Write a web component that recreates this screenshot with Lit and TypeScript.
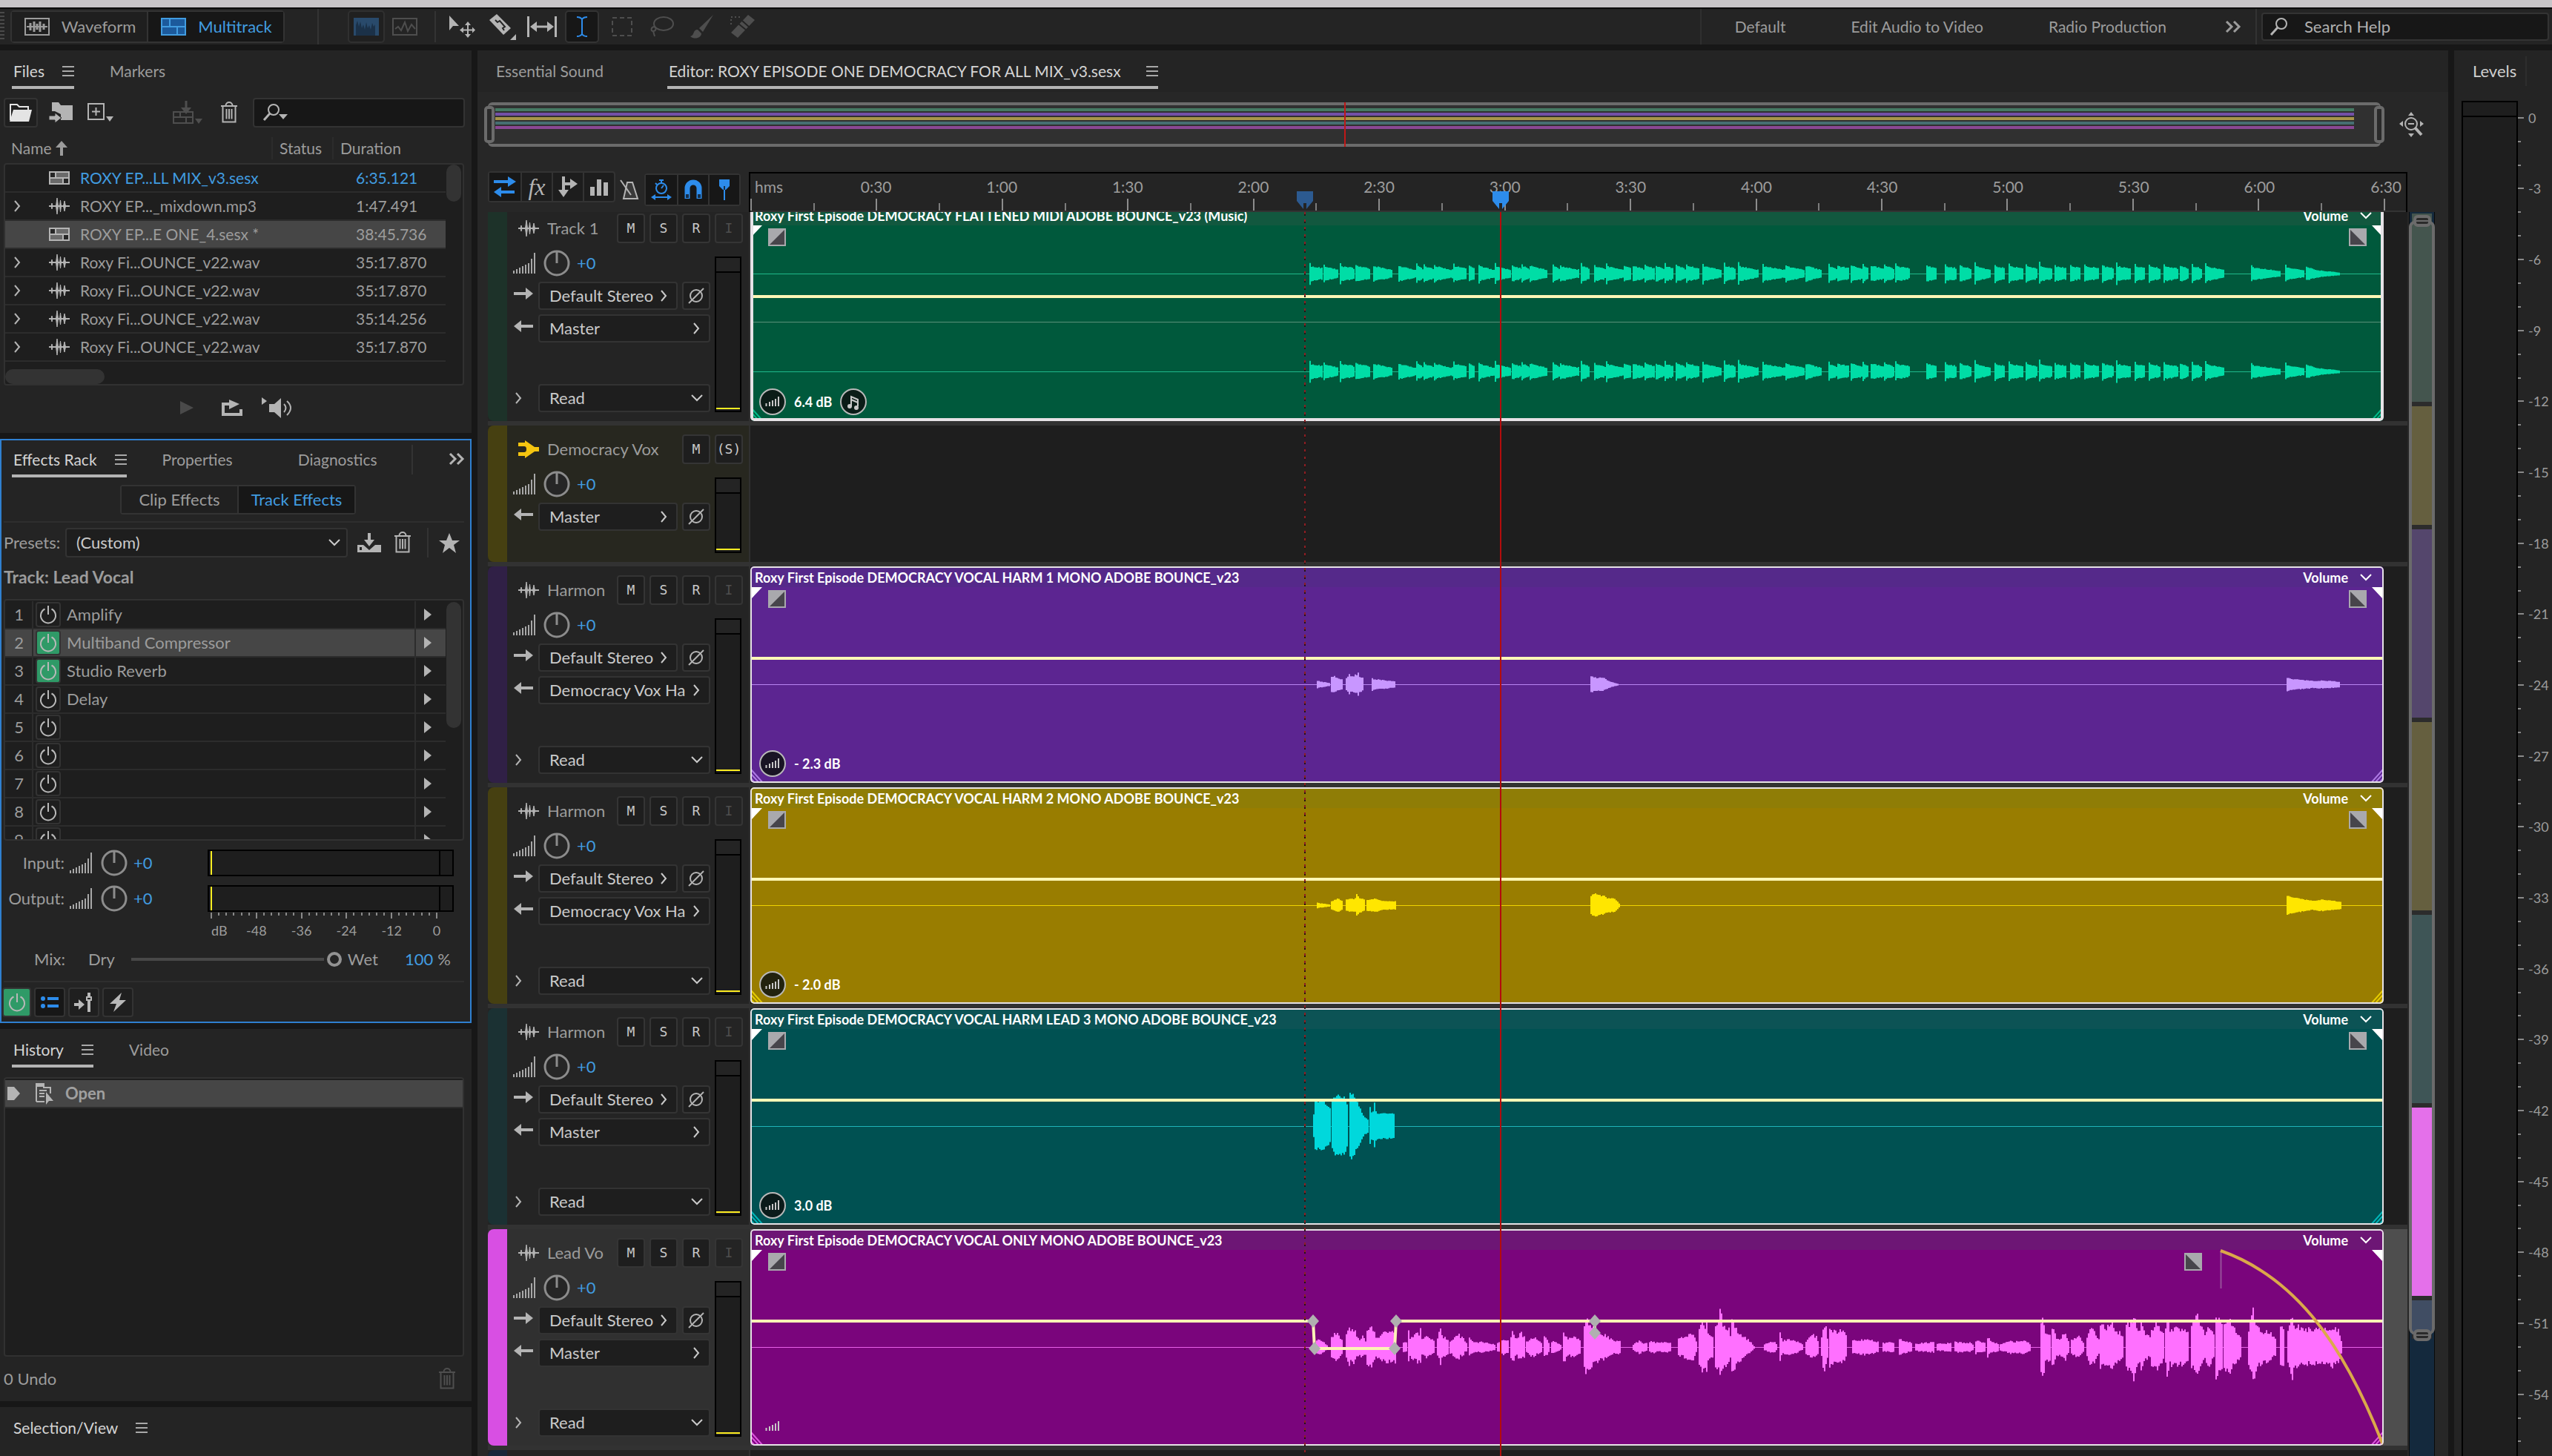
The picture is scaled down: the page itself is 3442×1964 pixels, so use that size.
import { LitElement, html, css, svg, nothing } from "lit";
import type { TemplateResult } from "lit";
import { customElement } from "lit/decorators.js";
import { classMap } from "lit/directives/class-map.js";
import { styleMap } from "lit/directives/style-map.js";

/* ---------- icons ---------- */

const icon = (w: number, h: number, body: unknown, cls = "") =>
  html`<svg class="icon ${cls}" width=${w} height=${h} viewBox="0 0 ${w} ${h}" aria-hidden="true">${body}</svg>`;

const menuIcon = () => icon(16, 14, svg`<path d="M0 1h16M0 7h16M0 13h16" stroke="currentColor" stroke-width="2"/>`);
const chevronRight = () => icon(8, 16, svg`<path d="M1 1l6 7-6 7" fill="none" stroke="currentColor" stroke-width="2"/>`);
const chevronDown = () => icon(16, 10, svg`<path d="M1 1l7 7 7-7" fill="none" stroke="currentColor" stroke-width="2"/>`);
const doubleChevron = () => icon(20, 16, svg`<path d="M1 1l7 7-7 7M11 1l7 7-7 7" fill="none" stroke="currentColor" stroke-width="3"/>`);
const trashIcon = () => icon(24, 30, svg`<path d="M1 6h22M7.500 5.500c0-6 9-6 9 0M3.500 6v21.500h17V6M8.500 10v13.500M12 10v13.500M15.500 10v13.500" fill="none" stroke="currentColor" stroke-width="2"/>`);
const powerIcon = () => icon(24, 26, svg`<path d="M7.500 5.500a10 10 0 1 0 9 0M12 1v12" fill="none" stroke="currentColor" stroke-width="2"/>`);
const waveIcon = () => icon(28, 22, svg`<path d="M0 11h28" stroke="currentColor" stroke-width="2"/><path d="M3 11l1-4 1 4-1 4zM9.500 11l1.500-11 1.500 11-1.500 11zM14.500 11l1-8 1 8-1 8zM19.500 11l1.500-7 1.500 7-1.500 7z" fill="currentColor" stroke="currentColor"/>`);
const sessionIcon = () => icon(28, 18, svg`<rect x="1" y="1" width="26" height="16" fill="#6a6a6a" stroke="currentColor" stroke-width="2"/><path d="M1 9h26M9 1v8M19 9v8" stroke="currentColor" stroke-width="2"/><rect x="2" y="2" width="6" height="6" fill="#262626"/><rect x="20" y="10" width="6" height="6" fill="#262626"/>`);
const signalIcon = () => icon(32, 28, svg`<path d="M1 28v-4M5 28v-6M9 28v-8M13 28v-10M17 28v-12M21 28v-14M25 28v-20M29 28V0" stroke="currentColor" stroke-width="2"/>`);
const knobIcon = () => icon(36, 36, svg`<circle cx="18" cy="18" r="16" fill="#262626" stroke="#8c8c8c" stroke-width="3"/><path d="M18 3v15" stroke="#8c8c8c" stroke-width="3"/>`);
const arrowRight = () => icon(26, 16, svg`<path d="M0 8h18" stroke="currentColor" stroke-width="4"/><path d="M16 0l10 8-10 8z" fill="currentColor"/>`);
const arrowLeft = () => icon(26, 16, svg`<path d="M8 8h18" stroke="currentColor" stroke-width="4"/><path d="M10 0L0 8l10 8z" fill="currentColor"/>`);
const phaseIcon = () => icon(24, 24, svg`<circle cx="12" cy="12" r="8" fill="none" stroke="currentColor" stroke-width="2"/><path d="M2 22L22 2" stroke="currentColor" stroke-width="2"/>`);
const triangleRight = (w: number, h: number) => icon(w, h, svg`<path d="M0 0L${w} ${h / 2}L0 ${h}z" fill="currentColor"/>`);

const waveformView = () => icon(34, 24, svg`<rect x="1" y="1" width="32" height="22" fill="none" stroke="currentColor" stroke-width="2"/><path d="M3 12h28" stroke="currentColor" stroke-width="2"/><path d="M8 7v10M13 5v14M17 8v8M21 5v14M26 8v8" stroke="currentColor" stroke-width="3"/>`);
const multitrackView = () => icon(34, 24, svg`<rect x="1" y="1" width="32" height="22" fill="#1c5a9c" stroke="currentColor" stroke-width="2"/><path d="M1 12h32M12 1v11M22 12v11" stroke="currentColor" stroke-width="2"/>`);
const frequencyView = () => icon(34, 24, svg`<rect width="34" height="24" fill="#294a6b"/><path d="M3 24V10l2-6 2 8 2-7 2 9 2-5 2 7 2-10 2 8 2-4 2 6 2-9 2 5 2-3v15z" fill="#1b3148"/>`);
const pitchView = () => icon(34, 24, svg`<rect x="1" y="1" width="32" height="22" fill="none" stroke="currentColor" stroke-width="2"/><path d="M4 15l4-3 4 5 5-11 4 12 5-9 5 6" fill="none" stroke="currentColor" stroke-width="2"/>`);
const moveTool = () => icon(36, 30, svg`<path d="M1 0l13 14H6l-5 6z" fill="currentColor"/><path d="M26 11v17M17 19.500h18" stroke="currentColor" stroke-width="2"/><path d="M26 8l4 5h-8zM26 30l4-5h-8zM15 19.500l5-4v8zM36 19.500l-4-4v8z" fill="currentColor"/>`);
const razorTool = () => icon(38, 36, svg`<path d="M2 9L12 1l19 19-10 9z" fill="currentColor"/><path d="M10 9l3 3 3-2 7 8-3 2 2 3" fill="none" stroke="#242424" stroke-width="2"/><path d="M38 28v8h-8z" fill="currentColor"/>`);
const slipTool = () => icon(40, 28, svg`<path d="M1.500 0v28M38.500 0v28M8 14h24" stroke="currentColor" stroke-width="3"/><path d="M4 14l9-7v14zM36 14l-9-7v14z" fill="currentColor"/>`);
const timeTool = () => icon(16, 28, svg`<path d="M1 1q5 0 7 3q2-3 7-3M1 27q5 0 7-3q2 3 7 3M8 4v20" fill="none" stroke="currentColor" stroke-width="2"/>`);
const marqueeTool = () => icon(28, 26, svg`<rect x="1" y="1" width="26" height="24" fill="none" stroke="currentColor" stroke-width="2" stroke-dasharray="6 4"/>`);
const lassoTool = () => icon(34, 28, svg`<ellipse cx="19" cy="10" rx="13" ry="9" fill="none" stroke="currentColor" stroke-width="2"/><path d="M7 14c-5 0-6 6-2 6s5-5 1-6M5 20l2 7" fill="none" stroke="currentColor" stroke-width="2"/>`);
const brushTool = () => icon(32, 32, svg`<path d="M31 0L12 18l5 5z" fill="currentColor"/><path d="M10 20c-7 0-4 8-10 9 6 5 15 2 15-4z" fill="currentColor"/>`);
const healTool = () => icon(36, 32, svg`<path d="M26 0l9 7L12 31l-9-7z" fill="currentColor"/><path d="M13 12l11 9M18 8l10 9" stroke="#242424" stroke-width="2"/><path d="M3 13V3h12" fill="none" stroke="currentColor" stroke-width="2" stroke-dasharray="2 3"/>`);
const searchIcon = () => icon(24, 24, svg`<circle cx="15" cy="8" r="7" fill="none" stroke="currentColor" stroke-width="2"/><path d="M10 13L1 23" stroke="currentColor" stroke-width="3"/>`);
const searchMenuIcon = () => icon(34, 24, svg`<circle cx="14" cy="8" r="7" fill="none" stroke="currentColor" stroke-width="2"/><path d="M9 13L1 22" stroke="currentColor" stroke-width="3"/><path d="M21 14h12l-6 7z" fill="currentColor"/>`);

const openIcon = () => icon(30, 24, svg`<path d="M1 22V1h9l3 3h12v4" fill="none" stroke="#e4e4e4" stroke-width="2"/><path d="M5 8h25l-4 16H0z" fill="#e4e4e4"/>`);
const importIcon = () => icon(32, 28, svg`<path d="M4 0h9l3 4h16v20H16v-8l-8-4H4z" fill="currentColor"/><path d="M0 18h8v-4l9 7-9 7v-4H0z" fill="currentColor" stroke="#242424" stroke-width="1"/>`);
const newIcon = () => icon(36, 26, svg`<rect x="1" y="1" width="21" height="21" fill="none" stroke="currentColor" stroke-width="2"/><path d="M11.500 6v11M6 11.500h11" stroke="currentColor" stroke-width="2"/><path d="M25 18h10l-5 7z" fill="currentColor"/>`);
const insertIcon = () => icon(40, 32, svg`<path d="M18 0v12" stroke="currentColor" stroke-width="3"/><path d="M11 9h14l-7 9z" fill="currentColor"/><rect x="1" y="15" width="26" height="15" fill="none" stroke="currentColor" stroke-width="2"/><path d="M1 22h26M10 15v7M18 22v8" stroke="currentColor" stroke-width="2"/><path d="M30 24h10l-5 7z" fill="currentColor"/>`);
const loopIcon = () => icon(28, 22, svg`<path d="M10 6H2v14h24v-7" fill="none" stroke="currentColor" stroke-width="4"/><path d="M10 0l14 6-14 7z" fill="currentColor"/>`);
const autoplayIcon = () => icon(40, 28, svg`<path d="M0 0l7 5-7 5zM10 9h7l9-8v27l-9-8h-7z" fill="currentColor"/><path d="M30 9q5 5 0 11M34 5q10 9 0 19" fill="none" stroke="currentColor" stroke-width="2"/>`);
const savePresetIcon = () => icon(32, 26, svg`<path d="M16 0v10" stroke="currentColor" stroke-width="4"/><path d="M9 9h14l-7 9z" fill="currentColor"/><path d="M0 16h8l8 7 8-7h8v10H0z" fill="currentColor"/><rect x="3" y="19" width="3" height="4" fill="#242424"/>`);
const starIcon = () => icon(28, 27, svg`<path d="M14 0l4 10h10l-8 6 3 11-9-7-9 7 3-11-8-6h10z" fill="currentColor"/>`);
const listIcon = () => icon(24, 18, svg`<circle cx="3" cy="4" r="3" fill="currentColor"/><circle cx="3" cy="14" r="3" fill="currentColor"/><path d="M9 4h15M9 14h15" stroke="currentColor" stroke-width="4"/>`);
const preFaderIcon = () => icon(26, 26, svg`<path d="M0 16h8" stroke="currentColor" stroke-width="4"/><path d="M6 9l8 7-8 7z" fill="currentColor"/><path d="M20 0v26" stroke="currentColor" stroke-width="4"/><rect x="17" y="6" width="6" height="4" fill="#242424" stroke="currentColor" stroke-width="2"/>`);
const boltIcon = () => icon(22, 26, svg`<path d="M16 0L0 15h9L5 26 22 10h-9z" fill="currentColor"/>`);
const historyDocIcon = () => icon(26, 28, svg`<path d="M1 25V1h10v5h9v8M1 25h11" fill="none" stroke="currentColor" stroke-width="2"/><path d="M1 1h10v4H1zM14 12l10 12h-6l-4 5z" fill="currentColor"/><path d="M5 10h10M5 14h7M5 18h7" stroke="currentColor" stroke-width="2"/>`);

const ioIcon = () => icon(30, 28, svg`<path d="M0 7h20M10 21h18" stroke="currentColor" stroke-width="4"/><path d="M19 0l11 7-11 7zM10 14L0 21l10 7z" fill="currentColor"/>`);
const sendsIcon = () => icon(26, 28, svg`<path d="M7 0v20M7 10h10" stroke="currentColor" stroke-width="4"/><path d="M0 18h14L7 28zM16 3l10 7-10 7z" fill="currentColor"/>`);
const eqIcon = () => icon(24, 24, svg`<path d="M3 24V12M12 24V2M21 24V6" stroke="currentColor" stroke-width="6"/>`);
const metronomeIcon = () => icon(26, 28, svg`<path d="M10 4h7l7 22H5z" fill="#3a3a3a" stroke="currentColor" stroke-width="2"/><path d="M1 1l14 20" stroke="currentColor" stroke-width="2"/>`);
const stopwatchIcon = () => icon(28, 28, svg`<circle cx="14" cy="12" r="7" fill="none" stroke="currentColor" stroke-width="2"/><path d="M14 12l3-4M11 1h6M14 1v4M6 5l2 2M3 24h22" stroke="currentColor" stroke-width="2"/><path d="M0 24l6-4v8zM28 24l-6-4v8z" fill="currentColor"/>`);
const magnetIcon = () => icon(24, 26, svg`<path d="M4 25V11a8 8 0 0 1 16 0v14" fill="none" stroke="currentColor" stroke-width="7"/><path d="M2 19h4v5H2zM18 19h4v5h-4z" fill="#16304c"/>`);
const pinIcon = () => icon(16, 28, svg`<path d="M1 0h14v9l-5 5H6L1 9z" fill="currentColor"/><path d="M8 6v22" stroke="currentColor" stroke-width="2"/><path d="M8 9v5" stroke="#16304c" stroke-width="2"/>`);
const zoomFullIcon = () => icon(34, 34, svg`<circle cx="16" cy="16" r="8" fill="none" stroke="currentColor" stroke-width="2"/><path d="M12 16h8" stroke="currentColor" stroke-width="2"/><path d="M21 21l9 10" stroke="currentColor" stroke-width="4"/><path d="M16 0l4 5h-8zM16 34l-4-5h8zM0 16l5-4v8zM33 16l-5-4v8z" fill="currentColor"/>`);
const busIcon = () => icon(28, 24, svg`<path d="M0 3h9V0l13 9h6v6h-6L9 24v-3H0v-5h8q3 0 3-4t-3-4H0z" fill="#f5c510"/>`);
const fadeIn = () => icon(24, 24, svg`<rect width="24" height="24" fill="#a9a9ad"/><path d="M22 2v20H2z" fill="#47454b"/>`);
const fadeOut = () => icon(24, 24, svg`<rect width="24" height="24" fill="#a9a9ad"/><path d="M2 2v20h20z" fill="#47454b"/>`);
const gainBadge = () => icon(36, 36, svg`<circle cx="18" cy="18" r="17" fill="#0d1210" fill-opacity=".85" stroke="#b8b8b8" stroke-width="2"/><path d="M9.500 24v-4M14 24v-6M18 24v-8M22 24V14M26 24V11" stroke="#c8c8c8" stroke-width="2"/>`);
const gainBare = () => icon(36, 36, svg`<path d="M9.500 24v-4M14 24v-6M18 24v-8M22 24V14M26 24V11" stroke="#c8c8c8" stroke-width="2"/>`);
const noteBadge = () => icon(36, 36, svg`<circle cx="18" cy="18" r="17" fill="#0d1210" fill-opacity=".85" stroke="#b8b8b8" stroke-width="2"/><path d="M15 24V11l9 4v9M15 15l9 4" fill="none" stroke="#c8c8c8" stroke-width="2"/><ellipse cx="13" cy="24" rx="3" ry="3" fill="#c8c8c8"/><ellipse cx="22" cy="26" rx="3" ry="3" fill="#c8c8c8"/>`);

/* ---------- waveform model ---------- */

/** A burst is a flat list of position, half-height pairs. */
type Burst = number[];
interface Section { origin: number; step: number; bursts: Burst[] }

const noise = (n: number) => {
  const v = Math.sin(n * 127.1 + 11.7) * 43758.5453;
  return v - Math.floor(v);
};

const burstPath = (b: Burst, s: Section, mid: number, rough: number) => {
  const at = (u: number) => {
    for (let i = 0; i + 3 < b.length; i += 2) {
      if (u <= b[i + 2]) return b[i + 1] + ((b[i + 3] - b[i + 1]) * (u - b[i])) / (b[i + 2] - b[i] || 1);
    }
    return b[b.length - 1];
  };
  const top: string[] = [];
  const low: string[] = [];
  const first = b[0];
  const last = b[b.length - 2];
  const inc = 2 / s.step;
  for (let u = first; u < last; u += inc) {
    const x = Math.round(s.origin + u * s.step);
    const a = at(u) / 3;
    const up = (a * (1 - rough * noise(x))).toFixed(1);
    const dn = (a * 0.92 * (1 - rough * noise(x + 900))).toFixed(1);
    top.push(`L${x} ${mid - +up}L${x + 2} ${mid - +up}`);
    low.unshift(`L${x + 2} ${mid + +dn}L${x} ${mid + +dn}`);
  }
  return `M${Math.round(s.origin + first * s.step)} ${mid}${top.join("")}${low.join("")}z`;
};

const A = 0.4847;
const C = 0.3571;

const musicSpans = [
  95, 132, 134, 175, 180, 219, 223, 262, 272, 324, 342, 390, 392, 409, 413, 439, 442, 492, 495, 532, 538, 554, 565, 608,
  611, 656, 658, 683, 685, 706, 708, 756, 771, 788, 792, 842, 850, 873, 887, 916, 920, 968, 970, 990, 994, 1023, 1027,
  1055, 1058, 1080, 1083, 1106, 1114, 1139, 1143, 1178, 1188, 1240, 1248, 1279, 1287, 1343, 1355, 1417, 1419, 1471, 1475,
  1519, 1539, 1561, 1564, 1596, 1600, 1630, 1634, 1650, 1656, 1690, 1694, 1720, 1724, 1762, 1812, 1840, 1864, 1895, 1904,
  1934, 1946, 1990, 2002, 2030, 2040, 2080, 2088, 2118, 2126, 2160, 2168, 2200, 2212, 2240, 2250, 2290, 2300, 2330, 2340,
  2380, 2392, 2420, 2430, 2460, 2472, 2510, 2518, 2540, 2550, 2575, 2588, 2640,
];
const musicBursts: Burst[] = [];
for (let i = 0; i < musicSpans.length; i += 2) {
  const [s, e] = [musicSpans[i], musicSpans[i + 1]];
  const spike = 34 + noise(s) * 16;
  musicBursts.push([s, spike, s + 4, 33, e - 3, e - s > 40 ? 18 : 26, e, 20]);
}
musicBursts.push([2716, 36, 2720, 28, 2798, 12], [2810, 38, 2814, 28, 2860, 16], [2868, 30, 2900, 16, 2960, 6]);

const leadA: Burst[] = [
  [114, 30, 118, 38, 125, 32, 143, 12], [154, 48, 168, 66, 186, 28], [196, 60, 203, 102, 206, 60, 218, 92, 222, 60],
  [224, 48, 232, 40, 240, 50, 250, 30, 252, 80, 264, 100, 270, 84, 276, 50, 288, 55, 300, 75, 332, 75],
  [354, 24, 362, 22, 366, 10], [369, 80, 373, 45, 385, 60, 393, 74, 399, 60], [403, 82, 407, 40, 418, 50, 430, 40, 444, 25],
  [449, 45, 458, 86, 462, 50, 472, 45, 482, 30], [484, 30, 507, 64, 514, 40, 519, 50, 524, 25, 532, 22],
  [538, 44, 545, 34, 552, 22], [555, 22, 575, 26, 609, 14], [616, 20, 630, 38, 638, 28, 648, 30],
  [653, 55, 657, 74, 668, 38, 680, 68, 690, 50, 693, 30], [697, 28, 705, 38, 718, 48, 730, 30, 741, 22],
  [747, 52, 755, 35, 763, 16], [768, 26, 775, 27, 794, 10], [801, 68, 806, 60, 815, 38, 830, 50, 847, 30],
  [858, 90, 864, 134, 874, 110, 885, 80, 905, 64, 925, 48, 940, 30, 959, 30], [994, 14, 1013, 34, 1020, 20, 1033, 18],
  [1040, 24, 1047, 30, 1060, 22, 1080, 22, 1101, 24], [1120, 40, 1130, 44, 1150, 62, 1163, 64, 1171, 20],
  [1178, 80, 1188, 140, 1190, 100, 1194, 90, 1198, 160, 1201, 80, 1216, 45],
  [1223, 90, 1232, 120, 1237, 178, 1241, 120, 1250, 90, 1262, 80, 1266, 45],
  [1269, 122, 1276, 112, 1285, 76, 1300, 52, 1318, 32, 1331, 6], [1360, 16, 1385, 28, 1395, 12],
  [1403, 68, 1410, 32, 1430, 38, 1450, 27, 1465, 14], [1476, 30, 1495, 55, 1505, 48, 1513, 20],
  [1519, 50, 1524, 100, 1530, 118, 1536, 40], [1541, 95, 1560, 70, 1574, 88, 1590, 40], [1606, 30, 1640, 38, 1680, 24],
  [1690, 20, 1720, 24], [1735, 40, 1748, 30, 1770, 20], [1780, 18, 1830, 24], [1840, 16, 1880, 20],
  [1890, 24, 1930, 22, 1940, 14], [1948, 30, 1975, 20],
];
const leadB: Burst[] = [
  [0, 50, 8, 28, 30, 18], [34, 14, 62, 30, 75, 26, 100, 34, 117, 16], [148, 112, 154, 158, 158, 80, 175, 60],
  [179, 95, 190, 50, 199, 32], [200, 38, 214, 68, 225, 30], [232, 35, 250, 52, 265, 25], [275, 40, 288, 100, 295, 72, 309, 35],
  [313, 105, 325, 92, 335, 98, 345, 122, 355, 74, 378, 60], [384, 100, 387, 150, 392, 95, 405, 156, 412, 98, 423, 80],
  [427, 110, 435, 74, 452, 45], [455, 84, 470, 112, 488, 60], [494, 90, 500, 150, 505, 84, 520, 94, 540, 84, 558, 72],
  [566, 94, 583, 142, 595, 92, 604, 50], [608, 78, 615, 94, 631, 50], [634, 145, 640, 130, 652, 104],
  [657, 104, 672, 120, 690, 74, 706, 45], [724, 80, 738, 176, 745, 104, 770, 60, 773, 84, 799, 40],
  [813, 90, 818, 112, 825, 50], [833, 84, 845, 164, 850, 106, 870, 90, 900, 80, 935, 82, 955, 96, 975, 74, 983, 20],
];

interface Clip {
  title: string; gain?: string; midi?: boolean; base: string; bar: string; wave: string; axis: string; grid: string;
  channels: number[]; sections: Section[]; rough: number; faded?: boolean; envelope?: boolean; bold?: boolean;
}
interface Track {
  name: string; bus?: boolean; input?: string; output: string; stripe: string; clip?: Clip; selected?: boolean;
}

const tracks: Track[] = [
  {
    name: "Track 1", input: "Default Stereo", output: "Master", stripe: "#1d3229",
    clip: {
      title: "Roxy First Episode DEMOCRACY FLATTENED MIDI ADOBE BOUNCE_v23 (Music)", gain: "6.4 dB", midi: true, bold: true,
      base: "#00593c", bar: "#12583f", wave: "#00dda6", axis: "#1fb98b", grid: "#5b9079", channels: [93, 225], rough: 0.16,
      sections: [{ origin: 708, step: A, bursts: musicBursts }],
    },
  },
  { name: "Democracy Vox", bus: true, output: "Master", stripe: "#464011" },
  {
    name: "Harmon", input: "Default Stereo", output: "Democracy Vox Ha", stripe: "#302046",
    clip: {
      title: "Roxy First Episode DEMOCRACY VOCAL HARM 1 MONO ADOBE BOUNCE_v23", gain: "- 2.3 dB",
      base: "#5c2591", bar: "#55298a", wave: "#c896ff", axis: "#b884f2", grid: "", channels: [159], rough: 0.15,
      sections: [
        { origin: 708, step: C, bursts: [[157, 17, 165, 14, 202, 7], [210, 34, 220, 36, 235, 26, 254, 22], [266, 28, 277, 44, 284, 32, 300, 42], [305, 40, 309, 62, 313, 38, 333, 25], [364, 28, 370, 24, 400, 20, 451, 14], [1190, 38, 1200, 30, 1236, 30, 1260, 14, 1294, 3]] },
        { origin: 2072, step: 1, bursts: [[0, 30, 8, 24, 36, 16, 50, 18, 72, 12]] },
      ],
    },
  },
  {
    name: "Harmon", input: "Default Stereo", output: "Democracy Vox Ha", stripe: "#464011",
    clip: {
      title: "Roxy First Episode DEMOCRACY VOCAL HARM 2 MONO ADOBE BOUNCE_v23", gain: "- 2.0 dB",
      base: "#997d00", bar: "#8f7d06", wave: "#ffe600", axis: "#f0d400", grid: "", channels: [159], rough: 0.12,
      sections: [
        { origin: 708, step: C, bursts: [[157, 13, 165, 10, 202, 5], [210, 18, 235, 30, 254, 17], [266, 26, 300, 30], [305, 48, 315, 34, 336, 24], [344, 24, 378, 30, 400, 20, 451, 18], [1190, 42, 1210, 52, 1230, 40, 1236, 44, 1250, 32, 1280, 30, 1299, 5]] },
        { origin: 2072, step: 1, bursts: [[0, 42, 10, 34, 34, 20, 48, 26, 62, 20, 74, 16]] },
      ],
    },
  },
  {
    name: "Harmon", input: "Default Stereo", output: "Master", stripe: "#1b3133",
    clip: {
      title: "Roxy First Episode DEMOCRACY VOCAL HARM LEAD 3 MONO ADOBE BOUNCE_v23", gain: "3.0 dB",
      base: "#005152", bar: "#0c5355", wave: "#00d8dc", axis: "#1fb4b8", grid: "", channels: [159], rough: 0.12,
      sections: [{ origin: 708, step: A, bursts: [[105, 50, 110, 118, 115, 104, 130, 108, 150, 84, 153, 40], [157, 104, 162, 130, 190, 130, 202, 84], [206, 140, 212, 148, 220, 120, 235, 75, 245, 40, 258, 28], [262, 84, 266, 60, 270, 65, 274, 100, 280, 58, 331, 56]] }],
    },
  },
  {
    name: "Lead Vo", input: "Default Stereo", output: "Master", stripe: "#d84fe3", selected: true,
    clip: {
      title: "Roxy First Episode DEMOCRACY VOCAL ONLY MONO ADOBE BOUNCE_v23",
      base: "#7a057c", bar: "#6d1675", wave: "#ff70ff", axis: "#e860e8", grid: "", channels: [159], rough: 0.28,
      faded: true, envelope: true,
      sections: [{ origin: 708, step: A, bursts: leadA }, { origin: 1668, step: 0.4859, bursts: leadB }],
    },
  },
];

const files = [
  { name: "ROXY EP...LL MIX_v3.sesx", time: "6:35.121", session: true, active: true },
  { name: "ROXY EP..._mixdown.mp3", time: "1:47.491" },
  { name: "ROXY EP...E ONE_4.sesx *", time: "38:45.736", session: true, selected: true },
  { name: "Roxy Fi...OUNCE_v22.wav", time: "35:17.870" },
  { name: "Roxy Fi...OUNCE_v22.wav", time: "35:17.870" },
  { name: "Roxy Fi...OUNCE_v22.wav", time: "35:14.256" },
  { name: "Roxy Fi...OUNCE_v22.wav", time: "35:17.870" },
];

const effects = [
  { name: "Amplify" }, { name: "Multiband Compressor", on: true, selected: true }, { name: "Studio Reverb", on: true },
  { name: "Delay" }, { name: "" }, { name: "" }, { name: "" }, { name: "" }, { name: "" },
];

const rulerLabels = ["0:30", "1:00", "1:30", "2:00", "2:30", "3:00", "3:30", "4:00", "4:30", "5:00", "5:30", "6:00"];
const overviewColors = ["#457a63", "#7350a8", "#a8954a", "#466f72", "#8a4894"];
const navigator: [string, number][] = [
  ["#44554e", 254], ["#655f3f", 160], ["#54466c", 254], ["#655f3f", 254], ["#3e5556", 254], ["#e470ea", 254], ["#404d63", 46],
];

@customElement("app-root")
export class AppRoot extends LitElement {
  static styles = css`
    :host {
      display: flex; flex-direction: column; height: 100vh; overflow: hidden; background: #171717; color: #9c9c9c;
      font: 22px/28px "Lato", "Liberation Sans", sans-serif; box-sizing: border-box;
    }
    * { box-sizing: border-box; }
    button, select, input { font: inherit; color: inherit; margin: 0; padding: 0; border: 0; background: none; outline: 0; border-radius: 0; }
    button { display: flex; align-items: center; justify-content: center; }
    .icon { display: block; flex: none; overflow: visible; }
    .titlebar { height: 10px; flex: none; background: #c8c5c8; }

    .topbar { display: flex; align-items: center; height: 50px; flex: none; background: #242424; border-top: 2px solid #0c0c0c; color: #b4b4b4; }
    .grip { width: 6px; height: 40px; margin-right: 8px; background: repeating-linear-gradient(#4a4a4a 0 2px, transparent 2px 5px); }
    .views { display: flex; width: 370px; height: 44px; margin-right: 44px; border: 2px solid #333; border-radius: 5px; }
    .view { flex: 1; gap: 16px; padding-left: 2px; color: #9c9c9c; background: #1f1f1f; }
    .view + .view { border-left: 2px solid #333; background: #171717; color: #419ce0; }
    .rule { width: 2px; align-self: stretch; background: #333; }
    .rule.short { align-self: center; height: 42px; }
    .tool { width: 54px; height: 44px; }
    .spectral .tool { width: 50px; }
    .tool.boxed { border: 2px solid #303030; border-radius: 5px; background: #202020; }
    .tool.on { width: 46px; margin: 0 4px; border: 2px solid #333; border-radius: 5px; background: #171717; color: #2d8ceb; }
    .dim { color: #4e4e4e; }
    .spectral { display: flex; gap: 2px; margin-left: 39px; margin-right: 15px; }
    .tools { display: flex; align-items: center; margin-left: 8px; }
    .workspaces { display: flex; align-items: center; margin-left: auto; align-self: stretch; border-left: 2px solid #2f2f2f; padding-left: 45px; color: #9c9c9c; gap: 88px; font-size: 21px; }
    .workspaces .more { margin-left: -8px; margin-right: -68px; }
    .help { display: flex; align-items: center; gap: 22px; width: 388px; height: 38px; margin: 0 4px 0 6px; padding-left: 10px; border: 2px solid #333; border-radius: 4px; background: #171717; }
    .help input { width: 280px; color: #b0b0b0; }
    input::placeholder { color: #b0b0b0; opacity: 1; }

    .body { display: grid; grid-template-columns: 636px minmax(0, 1fr) 132px; gap: 8px; flex: 1; min-height: 0; margin-top: 8px; }
    .side { display: flex; flex-direction: column; gap: 8px; min-height: 0; }
    .panel { background: #242424; padding: 0 10px 0 5px; flex: none; position: relative; }
    .tabs { display: flex; align-items: stretch; height: 52px; padding: 8px 0 0 11px; gap: 46px; font-size: 21px; }
    .tab { gap: 24px; color: #9c9c9c; border-bottom: 4px solid transparent; padding-left: 2px; white-space: nowrap; }
    .tab.on { color: #d4d4d4; border-color: #b4b4b4; }
    .tab .icon { color: #a8a8a8; }

    .filebar { display: flex; align-items: center; height: 40px; margin-top: 12px; color: #b4b4b4; }
    .filebar button { height: 40px; flex: none; }
    .filebar .open { width: 46px; border: 2px solid #333; border-radius: 4px; background: #1f1f1f; }
    .filebar .import { width: 62px; }
    .filebar .new { width: 46px; margin-right: 68px; }
    .filebar .insert { width: 52px; margin-right: 7px; color: #4e4e4e; }
    .filebar .del { width: 46px; }
    .search { display: flex; align-items: center; gap: 10px; flex: 1; min-width: 0; height: 40px; margin-left: 9px; margin-right: -1px; padding-left: 12px; border: 2px solid #333; border-radius: 4px; background: #171717; }
    .search input { flex: 1; min-width: 0; }

    .well { border: 2px solid #313131; border-radius: 4px; background: #1e1e1e; overflow: hidden; }
    .filebox { position: relative; margin-top: 8px; font-size: 21px; }
    table, thead, tbody { display: block; }
    thead tr { display: grid; grid-template-columns: 361px 82px 1fr; align-items: center; height: 40px; }
    th { font-weight: 400; text-align: left; padding: 0 10px; height: 30px; line-height: 30px; }
    th + th { border-left: 2px solid #2c2c2c; padding-left: 9px; }
    th button { gap: 5px; }
    .filelist { height: 300px; }
    .filelist tr { display: grid; grid-template-columns: 59px 42px 372px 119px; align-items: center; width: 594px; height: 38px; border-bottom: 2px solid #2c2c2c; }
    .filelist td { padding: 0; white-space: nowrap; }
    .filelist td:first-child { padding-left: 12px; }
    .filelist .icon { color: #b4b4b4; }
    tr.active { color: #419ce0; }
    tr.selected, .fx.selected { background: #464646; }
    .thumb { position: absolute; background: #333; border-radius: 10px; }
    .thumb.files-y { right: 4px; top: 42px; width: 20px; height: 50px; }
    .thumb.files-x { left: 2px; bottom: 2px; width: 134px; height: 20px; }
    .thumb.fx-y { right: 4px; top: 4px; width: 20px; height: 170px; }
    .preview { display: flex; align-items: center; justify-content: center; gap: 26px; height: 64px; padding: 0 0 4px 5px; color: #b4b4b4; }
    .preview .play { color: #4a4a4a; margin-right: 12px; }

    .rack { outline: 2px solid #2f80d0; outline-offset: -2px; height: 788px; }
    .rack .tab:nth-child(3) { margin-left: 40px; }
    .rack .rule { align-self: start; height: 40px; }
    .rack .tabs .more { margin-left: auto; padding-bottom: 6px; color: #b4b4b4; }
    .segs { display: flex; width: 318px; height: 40px; margin: 10px auto 0 157px; border: 2px solid #333; border-radius: 4px; }
    .segs button { flex: 1; background: #202020; }
    .segs button + button { border-left: 2px solid #333; background: #171717; color: #419ce0; }
    .hr { height: 2px; background: #2e2e2e; margin-top: 9px; }
    .presets { display: flex; align-items: center; height: 40px; margin-top: 7px; color: #9c9c9c; }
    .presets label { width: 83px; }
    .pick { display: grid; align-items: center; color: #cacaca; }
    .pick select { grid-area: 1 / 1; width: 100%; height: 100%; appearance: none; padding-left: 13px; border: 2px solid #333; border-radius: 4px; background: #1e1e1e; }
    .pick .icon { grid-area: 1 / 1; justify-self: end; margin-right: 10px; pointer-events: none; }
    .presets .pick { width: 381px; height: 40px; }
    .presets button { color: #b4b4b4; height: 36px; }
    .save { width: 58px; } .ptrash { width: 32px; margin-right: 17px; } .star { margin-left: 14px; }
    .trackname { font-size: 23px; font-weight: 700; margin: 14px 0; height: 28px; line-height: 24px; }
    .fxbox { position: relative; height: 326px; }
    .fxlist { height: 326px; margin: 0; padding: 1px 0 0; list-style: none; }
    .fx { display: grid; grid-template-columns: 36px 2px 45px 1fr 2px 40px; align-items: center; width: 594px; height: 38px; border-bottom: 2px solid #2c2c2c; }
    .fx .n { text-align: right; padding-right: 11px; }
    .fx i { height: 36px; background: #2c2c2c; }
    .power { width: 34px; height: 34px; border: 2px solid #333; border-radius: 4px; color: #b8b8b8; margin-left: 3px; }
    .power.on { background: #2f9a67; }
    .fx .go { color: #b4b4b4; height: 36px; padding-right: 8px; }
    .io { display: grid; grid-template-columns: 82px 49px 44px 1fr 332px; align-items: center; margin-top: 12px; padding-right: 14px; height: 36px; }
    .io.first { margin-top: 12px; }
    .io > span:first-child { text-align: right; }
    .io .icon { color: #a8a8a8; }
    .io .icon:nth-of-type(1) { margin-left: 7px; }
    .value { color: #419ce0; }
    .hmeter { height: 36px; border: 2px solid #000; background: #1e1e1e; padding-left: 2px; display: flex; }
    .hmeter::before { content: ""; width: 2px; background: #ffee22; }
    .hmeter::after { content: ""; width: 2px; background: #000; margin-left: auto; margin-right: 16px; }
    .dbticks { display: flex; justify-content: space-between; width: 306px; height: 8px; margin: 1px 0 0 279px; }
    .dbticks i { width: 2px; height: 4px; background: #8a8a8a; }
    .dbticks i:nth-child(6n + 1) { height: 8px; }
    .dblabels { display: flex; justify-content: space-between; width: 304px; margin: 4px 0 0 280px; font-size: 18px; line-height: 24px; }
    .dblabels span { display: flex; justify-content: center; width: 0; white-space: nowrap; }
    .dblabels span:first-child { justify-content: start; }
    .mix { display: flex; align-items: center; height: 28px; margin-top: 13px; }
    .mix label { width: 83px; text-align: right; margin-right: 31px; }
    .mix input { appearance: none; width: 284px; height: 20px; margin: 0 8px 0 22px; background: linear-gradient(#484848, #484848) 0 8px / 260px 4px no-repeat; }
    .mix input::-webkit-slider-thumb { appearance: none; width: 20px; height: 20px; border: 4px solid #929292; border-radius: 50%; background: #242424; }
    .mix .value { margin-left: auto; }
    .mix .unit { margin: 0 18px 0 6px; }
    .rackbar { display: flex; gap: 4px; margin-top: 7px; margin-left: -2px; }
    .rackbar button { width: 42px; height: 40px; border: 2px solid #333; border-radius: 4px; background: #1f1f1f; color: #b8b8b8; }
    .rackbar .on { background: #2f9a67; width: 39px; }
    .rackbar .blue { color: #2d8ceb; background: #171717; }
    .foot-hr { margin-top: 15px; }

    .history { flex: 1; min-height: 0; display: flex; flex-direction: column; }
    .hlist { flex: 1; margin: 13px 0 0; padding: 2px 0 0; list-style: none; }
    .hlist li { display: flex; align-items: center; height: 38px; padding-left: 3px; background: #464646; border-bottom: 2px solid #2c2c2c; font-weight: 700; color: #a0a0a0; }
    .hlist .icon { color: #b4b4b4; }
    .hlist .icon + .icon { margin: 0 14px 0 21px; }
    .undo { display: flex; align-items: center; justify-content: space-between; height: 60px; padding-right: 11px; }
    .selview { height: 66px; }

    .editor { background: #272727; min-width: 0; display: flex; flex-direction: column; overflow: hidden; }
    .editor .tabs { height: 56px; flex: none; background: #242424; padding: 8px 0 4px 23px; gap: 86px; }
    .editor .tab.on { gap: 34px; }
    .overview { display: flex; align-items: center; flex: none; margin: 14px 26px 0 14px; color: #b4b4b4; }
    .frame { position: relative; flex: 1; height: 60px; padding: 4px 35px 0 9px; border: solid #6b6b6b; border-width: 4px 1px; border-radius: 6px; background: #303030; display: flex; flex-direction: column; gap: 2px; }
    .frame i { height: 4px; }
    .grab { position: absolute; top: 1px; width: 14px; height: 50px; border: 4px solid #6b6b6b; border-radius: 5px; background: #2a2a2a; }
    .grab.l { left: -6px; } .grab.r { right: -6px; }
    .now { position: absolute; top: -4px; bottom: -4px; width: 2px; left: 45.25%; background: #c01818; }
    .zoomfit { width: 46px; height: 46px; margin-left: 19px; }

    .timeline { display: grid; grid-template-columns: 354px minmax(0, 1fr) 37px; grid-template-rows: 55px minmax(0, 1fr); flex: 1; min-height: 0; margin: 33px 18px 0 14px; }
    .etools { display: flex; align-items: start; color: #b4b4b4; }
    .group { display: flex; height: 42px; border: 2px solid #333; border-radius: 4px; background: #1d1d1d; }
    .group button { width: 42px; border-left: 2px solid #333; }
    .group button:first-child { border-left: 0; }
    .group.late { margin-top: 3px; height: 44px; margin-left: 6px; }
    .group .blue { color: #2d8ceb; background: #171717; }
    .fxtext { font: italic 32px/36px "Liberation Serif", serif; }
    .metro { width: 28px; height: 50px; margin-left: 5px; }
    .ruler { position: relative; margin: 1px 0 0 -2px; border: solid #000; border-width: 2px 2px 0 2px; background: #242424; padding-right: 28px; display: flex; flex-direction: column; justify-content: space-between; }
    .labels { display: grid; grid-template-columns: 1fr repeat(12, 2fr) 1fr; line-height: 34px; text-align: center; padding-top: 1px; white-space: nowrap; font-size: 21px; }
    .labels span:first-child { text-align: left; padding-left: 6px; }
    .labels span:last-child { justify-self: end; margin-right: -22px; }
    .ticks { display: flex; justify-content: space-between; align-items: end; height: 17px; border-bottom: 2px solid #333; margin-right: -28px; padding-right: 28px; }
    .ticks i { width: 2px; height: 10px; background: #7c7c7c; }
    .ticks i:nth-child(odd) { height: 16px; background: #8c8c8c; }

    .view-port { position: relative; grid-column: 1 / 3; overflow: hidden; min-height: 0; background: #1e1e1e; }
    .stack { margin-top: -10px; }
    .track { display: grid; grid-template-columns: 354px minmax(0, 1fr); border-bottom: 6px solid #323232; }
    .head { display: grid; grid-template-columns: 26px minmax(0, 1fr); border-right: 2px solid #303030; background: #242424; height: 292px; }
    .bus .head { height: 184px; background: #27271f; }
    .selected .head { background: #303030; }
    .stripe { border-radius: 8px 0 0 8px; }
    .controls { padding: 12px 8px 12px 8px; display: flex; flex-direction: column; }
    .name-row { display: flex; align-items: center; height: 40px; padding-left: 7px; }
    .name-row .icon { margin-right: 11px; color: #b4b4b4; }
    .tname { flex: 1; overflow: hidden; white-space: nowrap; }
    .msr { width: 38px; height: 40px; margin-left: 6px; border: 2px solid #353535; border-radius: 4px; background: #1e1e1e; color: #c8c8c8; font: 18px/24px "DejaVu Sans Mono", monospace; }
    .msr.off { color: #4e4e4e; background: #242424; }
    .lower { flex: 1; display: grid; grid-template-columns: minmax(0, 1fr) 36px; gap: 6px; margin-right: 2px; }
    .vmeter { margin-top: 18px; border: 2px solid #000; background: #1e1e1e; display: flex; flex-direction: column; }
    .vmeter::before { content: ""; height: 18px; border-bottom: 2px solid #000; background: #242424; }
    .vmeter::after { content: ""; height: 2px; background: #ffee22; margin-top: auto; margin-bottom: 2px; }
    .rows { display: flex; flex-direction: column; gap: 6px; }
    .vol { display: flex; align-items: center; height: 36px; margin: 9px 0 1px; color: #a8a8a8; }
    .vol .icon + .icon { margin: 0 9px; }
    .route { display: grid; grid-template-columns: 34px minmax(0, 1fr); height: 38px; align-items: center; }
    .route.phase { grid-template-columns: 34px minmax(0, 1fr) 38px; column-gap: 0; }
    .route > .icon { color: #b4b4b4; align-self: start; margin: 8px 0 0 1px; }
    .route .pick { height: 38px; }
    .route.phase .pick { margin-right: 6px; }
    .route .pick .icon { margin-right: 15px; }
    .read { margin-top: auto; }
    .read .pick .icon { margin-right: 10px; }
    .flip { height: 38px; border: 2px solid #353535; border-radius: 4px; background: #1e1e1e; color: #b4b4b4; }
    .expand { justify-content: start; padding-left: 3px; color: #b4b4b4; }

    .lane { position: relative; padding-right: 32px; }
    .selected .lane { background: #4e4e4e; }
    .clip { position: relative; height: 292px; color: #fff; font-size: 18px; font-weight: 700; line-height: 24px; overflow: hidden; border-radius: 5px; }
    .clip::after { content: ""; position: absolute; inset: 0; border: 2px solid #e6e2e6; border-radius: 5px; }
    .clip.bold::after { border-width: 4px; }
    .clip-bar { display: flex; align-items: center; height: 28px; padding: 2px 16px 0 6px; white-space: nowrap; }
    .clip-bar .mode { margin-left: auto; gap: 16px; }
    .plot { position: absolute; left: 0; top: 0; width: 100%; height: 292px; display: block; }
    .fade { position: absolute; top: 32px; left: 24px; }
    .fade.out { left: auto; right: 23px; }
    .faded .fade.out { right: 245px; }
    .gain { position: absolute; left: 12px; top: 248px; display: flex; align-items: center; gap: 11px; }

    .head-line { position: absolute; top: 0; bottom: 0; width: 2px; }
    .playhead { background: #b30c0c; }
    .last { background: repeating-linear-gradient(#8f1d22 0 3px, #241414 3px 5px, transparent 5px 10px); }
    .scale { position: absolute; top: 0; bottom: 0; left: 354px; right: 30px; pointer-events: none; }
    .ruler .scale { left: 0; right: 28px; }
    .flag { position: absolute; top: 24px; margin-left: -10px; color: #2d8ceb; }
    .flag.old { color: #2c5a90; }
    .next { height: 292px; }

    .nav { position: relative; margin-left: 2px; padding: 2px 3px 0; background: #14293d; border: solid #0a0a0a; border-width: 0 1px; }
    .nav-seg { border-bottom: 6px solid #2c2c2c; }
    .nav-frame { position: absolute; left: -1px; right: -1px; top: 12px; height: 1502px; border: 4px solid #6b6b6b; border-bottom-width: 3px; border-radius: 8px; }
    .nav-grab { position: absolute; left: 50%; width: 24px; height: 16px; margin-left: -12px; border: 4px solid #6b6b6b; border-radius: 6px; background: linear-gradient(#2a2a2a 0 3px, #6b6b6b 3px 5px, #2a2a2a 5px); }
    .nav-grab.t { top: 4px; } .nav-grab.b { top: 1507px; }

    .levels { background: #242424; display: flex; flex-direction: column; min-height: 0; overflow: hidden; }
    .levels h2 { margin: 8px 34px 0 0; padding-left: 25px; font: inherit; color: #d0d0d0; line-height: 40px; height: 40px; border-right: 2px solid #2e2e2e; }
    .levels-body { display: flex; flex: 1; min-height: 0; margin-top: 20px; }
    .bigmeter { width: 76px; margin-left: 10px; border: 2px solid #000; border-bottom: 0; background: #1e1e1e; }
    .bigmeter::before { content: ""; display: block; height: 18px; border-bottom: 2px solid #000; }
    .dbscale { flex: 1; margin-top: -25px; font-size: 18px; }
    .db { display: grid; grid-template-rows: repeat(3, 1fr); height: 5.163%; align-items: center; }
    .db i { width: 4px; height: 2px; background: #8a8a8a; }
    .db span { display: flex; align-items: center; gap: 6px; height: 0; white-space: nowrap; }
    .db span::before { content: ""; width: 8px; height: 2px; background: #8a8a8a; }
    .db.first > i:first-child { visibility: hidden; }
  `;

  private topbar() {
    return html`<header class="topbar">
      <span class="grip"></span>
      <div class="views">
        <button class="view">${waveformView()}Waveform</button>
        <button class="view">${multitrackView()}Multitrack</button>
      </div>
      <span class="rule"></span>
      <div class="spectral">
        <button class="tool boxed" aria-label="Spectral frequency">${frequencyView()}</button>
        <button class="tool dim" aria-label="Spectral pitch">${pitchView()}</button>
      </div>
      <span class="rule short"></span>
      <div class="tools">
        <button class="tool" aria-label="Move">${moveTool()}</button>
        <button class="tool" aria-label="Razor">${razorTool()}</button>
        <button class="tool" aria-label="Slip">${slipTool()}</button>
        <button class="tool on" aria-label="Time selection">${timeTool()}</button>
        <button class="tool dim" aria-label="Marquee">${marqueeTool()}</button>
        <button class="tool dim" aria-label="Lasso">${lassoTool()}</button>
        <button class="tool dim" aria-label="Brush">${brushTool()}</button>
        <button class="tool dim" aria-label="Spot healing">${healTool()}</button>
      </div>
      <nav class="workspaces">
        <button>Default</button><button>Edit Audio to Video</button><button>Radio Production</button>
        <button class="more" aria-label="More workspaces">${doubleChevron()}</button>
        <span class="rule"></span>
      </nav>
      <div class="help">${searchIcon()}<input aria-label="Search Help" placeholder="Search Help" /></div>
    </header>`;
  }

  private filesPanel() {
    return html`<section class="panel">
      <div class="tabs"><button class="tab on">Files${menuIcon()}</button><button class="tab">Markers</button></div>
      <div class="filebar">
        <button class="open" aria-label="Open file">${openIcon()}</button>
        <button class="import" aria-label="Import file">${importIcon()}</button>
        <button class="new" aria-label="New file">${newIcon()}</button>
        <button class="insert" aria-label="Insert into multitrack">${insertIcon()}</button>
        <button class="del" aria-label="Close file">${trashIcon()}</button>
        <div class="search">${searchMenuIcon()}<input aria-label="Filter files" /></div>
      </div>
      <div class="filebox">
        <table>
          <thead><tr>
            <th><button>Name${icon(16, 20, svg`<path d="M8 20V4" stroke="currentColor" stroke-width="4"/><path d="M8 0l8 9H0z" fill="currentColor"/>`)}</button></th>
            <th>Status</th><th>Duration</th>
          </tr></thead>
          <tbody class="well filelist">
            ${files.map((f) => html`<tr class=${classMap({ active: !!f.active, selected: !!f.selected })}>
              <td>${f.session ? nothing : chevronRight()}</td>
              <td>${f.session ? sessionIcon() : waveIcon()}</td>
              <td>${f.name}</td><td>${f.time}</td>
            </tr>`)}
          </tbody>
        </table>
        <span class="thumb files-y"></span><span class="thumb files-x"></span>
      </div>
      <div class="preview">
        <button class="play" aria-label="Play">${triangleRight(18, 18)}</button>
        <button aria-label="Loop">${loopIcon()}</button>
        <button aria-label="Auto-play">${autoplayIcon()}</button>
      </div>
    </section>`;
  }

  private ioRow(label: string, first = false) {
    return html`<div class=${classMap({ io: true, first })}>
      <span>${label}</span>${signalIcon()}${knobIcon()}<span class="value">+0</span><div class="hmeter"></div>
    </div>`;
  }

  private rackPanel() {
    return html`<section class="panel rack">
      <div class="tabs">
        <button class="tab on">Effects Rack${menuIcon()}</button><button class="tab">Properties</button><button class="tab">Diagnostics</button>
        <span class="rule"></span><button class="more" aria-label="More panels">${doubleChevron()}</button>
      </div>
      <div class="segs"><button>Clip Effects</button><button>Track Effects</button></div>
      <div class="hr"></div>
      <div class="presets">
        <label for="preset">Presets:</label>
        <span class="pick"><select id="preset"><option>(Custom)</option></select>${chevronDown()}</span>
        <button class="save" aria-label="Save preset">${savePresetIcon()}</button>
        <button class="ptrash" aria-label="Delete preset">${trashIcon()}</button>
        <span class="rule"></span>
        <button class="star" aria-label="Favorite">${starIcon()}</button>
      </div>
      <div class="trackname">Track: Lead Vocal</div>
      <div class="fxbox">
        <ul class="well fxlist">
          ${effects.map((e, i) => html`<li class=${classMap({ fx: true, selected: !!e.selected })}>
            <span class="n">${i + 1}</span><i></i>
            <button class=${classMap({ power: true, on: !!e.on })} aria-label="Power">${powerIcon()}</button>
            <span>${e.name}</span><i></i>
            <button class="go" aria-label="Choose effect">${triangleRight(10, 16)}</button>
          </li>`)}
        </ul>
        <span class="thumb fx-y"></span>
      </div>
      ${this.ioRow("Input:", true)}${this.ioRow("Output:")}
      <div class="dbticks">${Array.from({ length: 31 }, () => html`<i></i>`)}</div>
      <div class="dblabels">${["dB", "-48", "-36", "-24", "-12", "0"].map((l) => html`<span>${l}</span>`)}</div>
      <div class="mix">
        <label for="mix">Mix:</label>Dry<input id="mix" type="range" min="0" max="100" .value=${"100"} />Wet
        <span class="value">100</span><span class="unit">%</span>
      </div>
      <div class="hr foot-hr"></div>
      <div class="rackbar">
        <button class="on" aria-label="Rack power">${powerIcon()}</button>
        <button class="blue" aria-label="List view">${listIcon()}</button>
        <button aria-label="Pre-fader">${preFaderIcon()}</button>
        <button aria-label="Pre-render">${boltIcon()}</button>
      </div>
    </section>`;
  }

  private historyPanel() {
    return html`<section class="panel history">
        <div class="tabs"><button class="tab on">History${menuIcon()}</button><button class="tab">Video</button></div>
        <ul class="well hlist"><li>
          ${icon(17, 18, svg`<path d="M0 0h9l8 9-8 9H0z" fill="currentColor"/>`)}${historyDocIcon()}Open
        </li></ul>
        <div class="undo"><span>0 Undo</span><button class="dim" aria-label="Clear history">${trashIcon()}</button></div>
      </section>
      <section class="panel selview">
        <div class="tabs"><button class="tab on" style=${styleMap({ borderColor: "transparent" })}>Selection/View${menuIcon()}</button></div>
      </section>`;
  }

  private pick(label: string, value: string, glyph: TemplateResult) {
    return html`<span class="pick"><select aria-label=${label}><option>${value}</option></select>${glyph}</span>`;
  }

  private head(t: Track) {
    const flip = html`<button class="flip" aria-label="Invert phase">${phaseIcon()}</button>`;
    return html`<div class="head">
      <span class="stripe" style=${styleMap({ background: t.stripe })}></span>
      <div class="controls">
        <div class="name-row">
          ${t.bus ? busIcon() : waveIcon()}<span class="tname">${t.name}</span>
          ${t.bus
            ? html`<button class="msr">M</button><button class="msr">(S)</button>`
            : html`<button class="msr">M</button><button class="msr">S</button><button class="msr">R</button><button class="msr off">I</button>`}
        </div>
        <div class="lower">
          <div class="rows">
            <div class="vol">${signalIcon()}${knobIcon()}<span class="value">+0</span></div>
            ${t.bus
              ? html`<div class="route phase">${arrowLeft()}${this.pick("Output", t.output, chevronRight())}${flip}</div>`
              : html`<div class="route phase">${arrowRight()}${this.pick("Input", t.input ?? "", chevronRight())}${flip}</div>
                  <div class="route">${arrowLeft()}${this.pick("Output", t.output, chevronRight())}</div>
                  <div class="route read"><button class="expand" aria-label="Expand automation">${chevronRight()}</button>${this.pick("Automation", "Read", chevronDown())}</div>`}
          </div>
          <div class="vmeter"></div>
        </div>
      </div>
    </div>`;
  }

  private clip(c: Clip) {
    const nodes = [[759, 124], [871, 124], [1139, 124], [761, 161], [869, 161], [1139, 140]];
    const hatch = svg`<path d="M1 274l16 18M1 280l11 12M1 286l5 6M2202 274l-16 18M2202 280l-11 12M2202 286l-5 6" stroke=${c.wave} stroke-opacity=".75" stroke-width="2"/>`;
    return html`<div class=${classMap({ clip: true, bold: !!c.bold, faded: !!c.faded })} style=${styleMap({ background: c.base })}>
      <div class="clip-bar" style=${styleMap({ background: c.bar })}><span>${c.title}</span><button class="mode">Volume${chevronDown()}</button></div>
      <svg class="plot" viewBox="0 0 2203 292" preserveAspectRatio="none" aria-hidden="true">
        <path d="M2 28h14L2 43zM2201 28h-14l14 15z" fill="#fff"/>
        ${c.channels.map((y) => svg`<path d="M0 ${y + 0.5}H2203" stroke=${c.axis}/>`)}
        ${c.grid ? svg`<path d="M0 158.500H2203" stroke=${c.grid}/>` : nothing}
        ${c.channels.map((y) => c.sections.map((s) => svg`<path d=${s.bursts.map((b) => burstPath(b, s, y + 0.5, c.rough)).join("")} fill=${c.wave}/>`))}
        ${hatch}
        ${c.envelope
          ? svg`<path d="M0 124H759L761 161H869L871 124H1139V140M1139 124H2203" fill="none" stroke="#fdf2b6" stroke-width="4"/>
              <path d="M1983.500 29v51" stroke="#b49ab8" stroke-opacity=".5" stroke-width="2"/>
              <path d="M1983 29C2076 62 2144 142 2202 291" fill="none" stroke="#dba84a" stroke-width="4"/>
              ${nodes.map(([x, y]) => svg`<path d="M${x - 8} ${y}l8-9 8 9-8 9z" fill="#b0b0b0"/>`)}`
          : svg`<path d="M0 124H2203" stroke="#fdf7b6" stroke-width="4"/>`}
      </svg>
      <span class="fade">${fadeIn()}</span><span class="fade out">${fadeOut()}</span>
      <div class="gain">${c.gain ? gainBadge() : gainBare()}${c.gain ? html`<span>${c.gain}</span>` : nothing}${c.midi ? noteBadge() : nothing}</div>
    </div>`;
  }

  private editor() {
    const ticks = Array.from({ length: 27 }, () => html`<i></i>`);
    const flag = (cls: string, left: string) => html`<span class="flag ${cls}" style=${styleMap({ left })}>
      ${icon(22, 24, svg`<path d="M0 0h22v13L13 24V16h-4v8L0 13z" fill="currentColor"/>`)}</span>`;
    return html`<main class="editor">
      <div class="tabs">
        <button class="tab">Essential Sound</button>
        <button class="tab on">Editor: ROXY EPISODE ONE DEMOCRACY FOR ALL MIX_v3.sesx${menuIcon()}</button>
      </div>
      <div class="overview">
        <div class="frame">
          ${overviewColors.map((c) => html`<i style=${styleMap({ background: c })}></i>`)}
          <span class="now"></span><span class="grab l"></span><span class="grab r"></span>
        </div>
        <button class="zoomfit" aria-label="Zoom out full">${zoomFullIcon()}</button>
      </div>
      <div class="timeline">
        <div class="etools">
          <div class="group">
            <button class="blue" aria-label="Inputs and outputs">${ioIcon()}</button>
            <button aria-label="Effects"><span class="fxtext">fx</span></button>
            <button aria-label="Sends">${sendsIcon()}</button>
            <button aria-label="EQ">${eqIcon()}</button>
          </div>
          <button class="metro" aria-label="Metronome">${metronomeIcon()}</button>
          <div class="group late">
            <button class="blue" aria-label="Stretch">${stopwatchIcon()}</button>
            <button class="blue" aria-label="Snapping">${magnetIcon()}</button>
            <button class="blue" aria-label="Follow playhead">${pinIcon()}</button>
          </div>
        </div>
        <div class="ruler">
          <div class="labels"><span>hms</span>${rulerLabels.map((l) => html`<span>${l}</span>`)}<span>6:30</span></div>
          <div class="ticks">${ticks}</div>
          <div class="scale">${flag("old", "33.88%")}${flag("", "45.85%")}</div>
        </div>
        <span></span>
        <div class="view-port">
          <div class="stack">
            ${tracks.map((t) => html`<div class=${classMap({ track: true, bus: !!t.bus, selected: !!t.selected })}>
              ${this.head(t)}<div class="lane">${t.clip ? this.clip(t.clip) : nothing}</div>
            </div>`)}
            <div class="track next"><div class="head"><span class="stripe" style=${styleMap({ background: "#17283a" })}></span></div></div>
          </div>
          <div class="scale">
            <span class="head-line last" style=${styleMap({ left: "33.88%" })}></span>
            <span class="head-line playhead" style=${styleMap({ left: "45.85%" })}></span>
          </div>
        </div>
        <div class="nav">
          ${navigator.map(([c, h]) => html`<div class="nav-seg" style=${styleMap({ background: c, height: `${h + 6}px` })}></div>`)}
          <span class="nav-frame"></span><span class="nav-grab t"></span><span class="nav-grab b"></span>
        </div>
      </div>
    </main>`;
  }

  private levels() {
    return html`<aside class="levels">
      <h2>Levels</h2>
      <div class="levels-body">
        <div class="bigmeter"></div>
        <div class="dbscale">
          ${Array.from({ length: 20 }, (_, i) => html`<div class=${classMap({ db: true, first: i === 0 })}><i></i><span>${i ? `-${i * 3}` : "0"}</span><i></i></div>`)}
        </div>
      </div>
    </aside>`;
  }

  render() {
    return html`<div class="titlebar"></div>
      ${this.topbar()}
      <div class="body">
        <div class="side">${this.filesPanel()}${this.rackPanel()}${this.historyPanel()}</div>
        ${this.editor()}${this.levels()}
      </div>`;
  }
}
